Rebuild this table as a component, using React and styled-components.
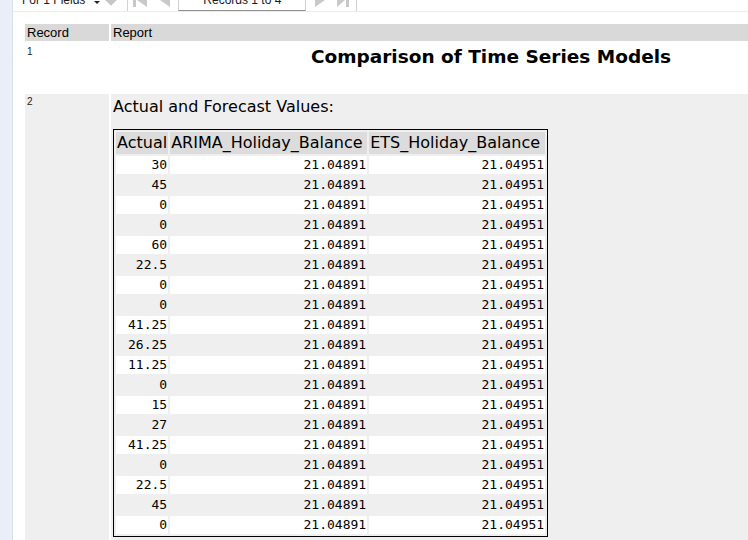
import React from 'react';
import styled, { createGlobalStyle } from 'styled-components';

const GlobalStyle = createGlobalStyle`
  html, body {
    margin: 0;
    padding: 0;
    overflow: hidden;
    background: #fff;
  }
  body {
    font-family: "Liberation Sans", Arial, sans-serif;
    color: #000;
  }
`;

const Shell = styled.div`
  display: flex;
  height: 540px;
  overflow: hidden;
`;

const SideStrip = styled.div`
  flex: none;
  width: 12px;
  background: #e9eef8;
  border-right: 1px solid #d8dfeb;
`;

const Main = styled.div`
  flex: 1;
  min-width: 0;
  display: flex;
  flex-direction: column;
`;

const Toolbar = styled.div`
  flex: none;
  height: 11px;
  overflow: hidden;
  border-bottom: 1px solid #ececec;
`;

const ToolbarRow = styled.div`
  display: flex;
  align-items: center;
  height: 24px;
  margin-top: -12px;
  padding-left: 9px;
  font-size: 12px;
  color: #1a1a1a;
`;

const FieldsLabel = styled.span`
  white-space: nowrap;
`;

const DropArrow = styled.span`
  width: 0;
  height: 0;
  margin-left: 9px;
  margin-top: 4px;
  border-left: 3px solid transparent;
  border-right: 3px solid transparent;
  border-top: 3px solid #222;
`;

const Separator = styled.span`
  align-self: stretch;
  width: 1px;
  background: #d2d2d2;
  margin-left: ${p => p.$left}px;
`;

const NavIcon = styled.svg`
  flex: none;
  margin-left: ${p => p.$left}px;
  fill: #c8c8c8;
`;

const RecordsButton = styled.div`
  align-self: stretch;
  flex: none;
  width: 128px;
  margin-left: 8px;
  display: flex;
  align-items: center;
  justify-content: center;
  background: #fff;
  border: 1px solid #cfcfcf;
  border-bottom: 1px solid #8e8e8e;
  box-sizing: border-box;
  height: 23px;
  white-space: nowrap;
`;

const Content = styled.div`
  padding: 10px 0 0 10px;
`;

const RecordTable = styled.table`
  border-collapse: separate;
  border-spacing: 2px;
  width: 850px;
`;

const HeadCell = styled.th`
  background: #d9d9d9;
  text-align: left;
  font-weight: normal;
  font-size: 13px;
  line-height: 15px;
  padding: 1px 2px;
  width: ${p => (p.$w ? `${p.$w}px` : 'auto')};
`;

const RecordCell = styled.td`
  vertical-align: top;
  background: ${p => p.$bg};
  font-size: 10px;
  line-height: 11px;
  padding: ${p => p.$top}px 2px 0;
  color: #222;
`;

const ReportCell = styled.td`
  vertical-align: top;
  background: ${p => p.$bg};
  padding: ${p => p.$pad};
`;

const Title = styled.div`
  text-align: center;
  font-family: "DejaVu Sans", Verdana, sans-serif;
  font-weight: bold;
  font-size: 18.5px;
  line-height: 22px;
`;

const SectionLabel = styled.div`
  font-family: "DejaVu Sans", Verdana, sans-serif;
  font-size: 16px;
  line-height: 19px;
`;

const DataTable = styled.table`
  margin-top: 13px;
  border: 1px solid #000;
  border-collapse: separate;
  border-spacing: 2px;
`;

const ColHead = styled.th`
  background: #dcdcdc;
  font-family: "DejaVu Sans", Verdana, sans-serif;
  font-weight: normal;
  font-size: 16px;
  line-height: 20px;
  padding: 1px 1px;
  text-align: left;
  white-space: nowrap;
  width: ${p => p.$w}px;
`;

const DataRow = styled.tr`
  background: ${p => (p.$odd ? '#fff' : 'transparent')};
`;

const DataCell = styled.td`
  font-family: "DejaVu Sans Mono", "Lucida Console", monospace;
  font-size: 13px;
  line-height: 18px;
  padding: 0 1px;
  text-align: right;
  white-space: nowrap;
`;

const actuals = [
  '30', '45', '0', '0', '60', '22.5', '0', '0', '41.25', '26.25',
  '11.25', '0', '15', '27', '41.25', '0', '22.5', '45', '0',
];

function App() {
  return (
    <>
      <GlobalStyle />
      <Shell>
        <SideStrip />
        <Main>
          <Toolbar>
            <ToolbarRow>
              <FieldsLabel>For 1 Fields</FieldsLabel>
              <DropArrow />
              <NavIcon $left={3} width="16" height="16" viewBox="0 0 16 16">
                <path d="M1.5 4.5 L8 11 L14.5 4.5" fill="none" stroke="#c6c6c6" strokeWidth="4" />
              </NavIcon>
              <Separator $left={8} />
              <NavIcon $left={5} width="14" height="16" viewBox="0 0 14 16">
                <rect x="0" y="1" width="3" height="14" />
                <path d="M14 1 L14 15 L4 8 Z" />
              </NavIcon>
              <NavIcon $left={13} width="10" height="16" viewBox="0 0 10 16">
                <path d="M10 1 L10 15 L0 8 Z" />
              </NavIcon>
              <RecordsButton>Records 1 to 4</RecordsButton>
              <NavIcon $left={9} width="10" height="16" viewBox="0 0 10 16">
                <path d="M0 1 L0 15 L10 8 Z" />
              </NavIcon>
              <NavIcon $left={12} width="12" height="16" viewBox="0 0 12 16">
                <path d="M0 1 L0 15 L8 8 Z" />
                <rect x="9" y="1" width="3" height="14" />
              </NavIcon>
              <Separator $left={7} />
            </ToolbarRow>
          </Toolbar>
          <Content>
            <RecordTable>
              <thead>
                <tr>
                  <HeadCell $w={80}>Record</HeadCell>
                  <HeadCell>Report</HeadCell>
                </tr>
              </thead>
              <tbody>
                <tr>
                  <RecordCell $bg="#fff" $top={3}>1</RecordCell>
                  <ReportCell $bg="#fff" $pad="3px 0 24px">
                    <Title>Comparison of Time Series Models</Title>
                  </ReportCell>
                </tr>
                <tr>
                  <RecordCell $bg="#efefef" $top={2}>2</RecordCell>
                  <ReportCell $bg="#efefef" $pad="3px 0 10px 2px">
                    <SectionLabel>Actual and Forecast Values:</SectionLabel>
                    <DataTable>
                      <thead>
                        <tr>
                          <ColHead $w={50}>Actual</ColHead>
                          <ColHead $w={195}>ARIMA_Holiday_Balance</ColHead>
                          <ColHead $w={174}>ETS_Holiday_Balance</ColHead>
                        </tr>
                      </thead>
                      <tbody>
                        {actuals.map((v, i) => (
                          <DataRow key={i} $odd={i % 2 === 0}>
                            <DataCell>{v}</DataCell>
                            <DataCell>21.04891</DataCell>
                            <DataCell>21.04951</DataCell>
                          </DataRow>
                        ))}
                      </tbody>
                    </DataTable>
                  </ReportCell>
                </tr>
              </tbody>
            </RecordTable>
          </Content>
        </Main>
      </Shell>
    </>
  );
}

export default App;
